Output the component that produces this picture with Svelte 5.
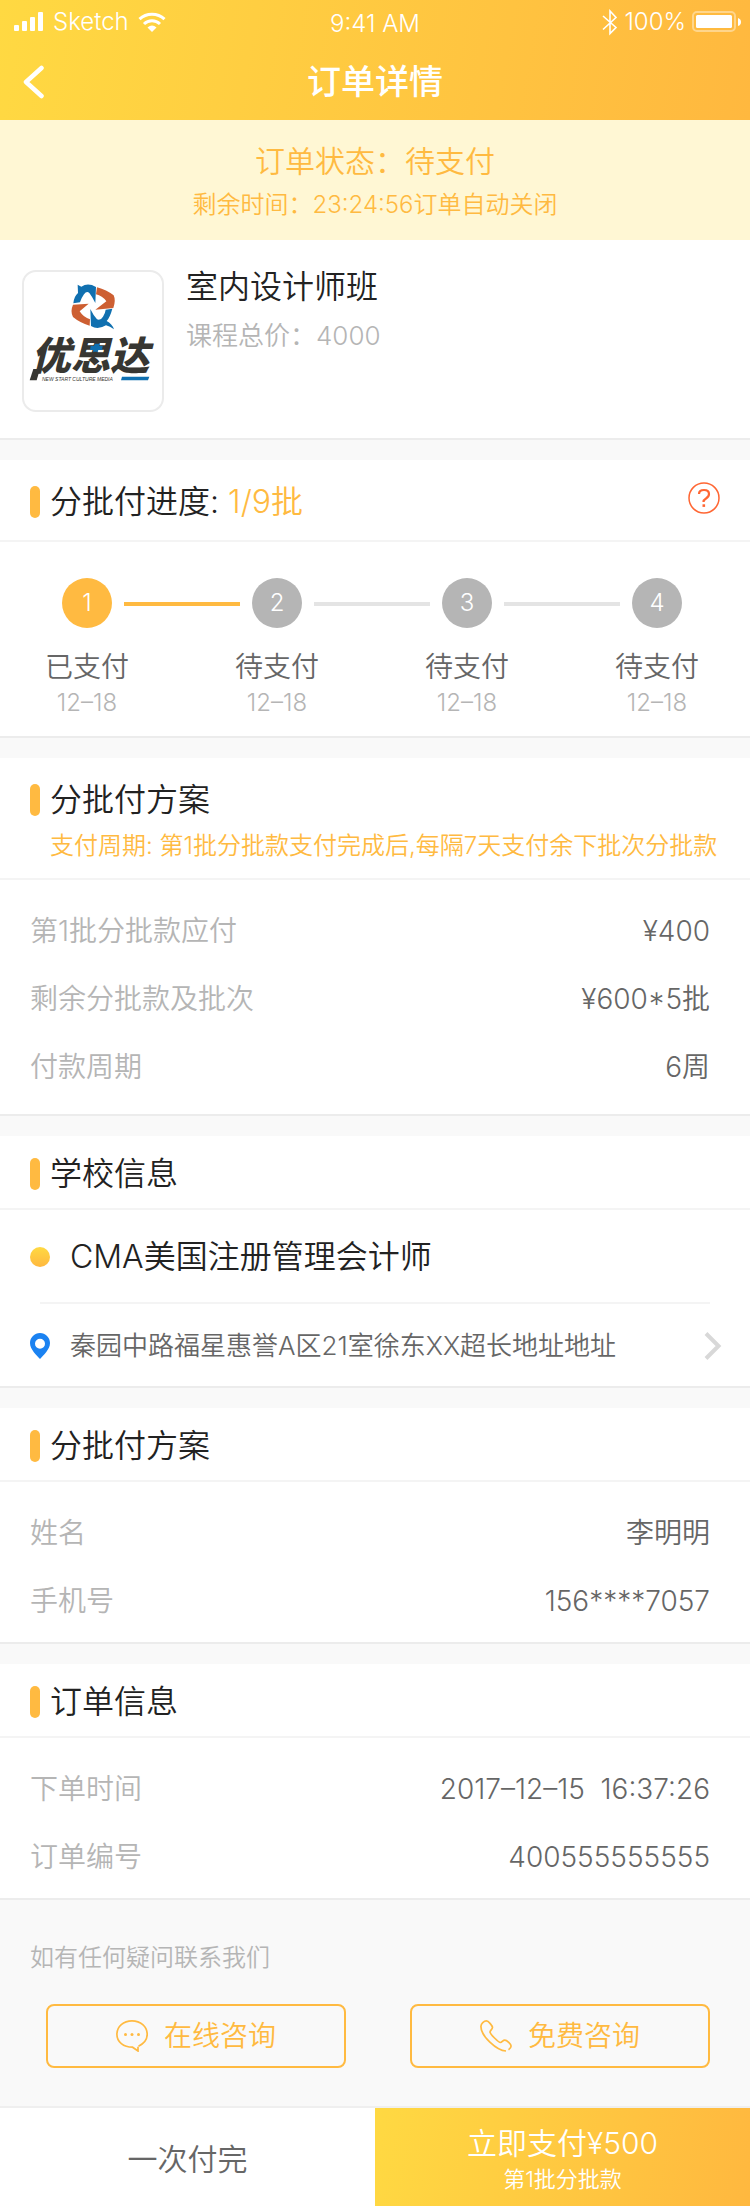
<script>
  const steps = [
    { label: '已支付', date: '12–18', done: true },
    { label: '待支付', date: '12–18', done: false },
    { label: '待支付', date: '12–18', done: false },
    { label: '待支付', date: '12–18', done: false }
  ];
  const plan = [
    ['第1批分批款应付', '¥400'],
    ['剩余分批款及批次', '¥600*5批'],
    ['付款周期', '6周']
  ];
  const person = [
    ['姓名', '李明明'],
    ['手机号', '156****7057']
  ];
  const order = [
    ['下单时间', '2017–12–15\u00a0 16:37:26'],
    ['订单编号', '400555555555']
  ];
</script>

{#snippet rows(items)}
  <dl class="rows">
    {#each items as [name, value]}
      <div class="row"><dt>{name}</dt><dd>{value}</dd></div>
    {/each}
  </dl>
{/snippet}

<div class="page">
  <header class="top">
    <div class="statusbar">
      <div class="carrier">
        <svg width="30" height="20" viewBox="0 0 30 20" fill="#fff" aria-hidden="true">
          <rect x="0" y="13" width="5" height="6" rx="1" /><rect x="8" y="9" width="5" height="10" rx="1" />
          <rect x="16" y="5" width="5" height="14" rx="1" /><rect x="24" y="0" width="5" height="19" rx="1" />
        </svg>
        <span>Sketch</span>
        <svg width="28" height="20" viewBox="0 0 28 20" fill="none" stroke="#fff" stroke-width="3" aria-hidden="true">
          <path d="M1.5 7.2A18 18 0 0 1 26.500 7.200" /><path d="M6 12A11.500 11.500 0 0 1 22 12" />
          <path d="M9.500 15.500Q14 11.300 18.500 15.500L14 20Z" fill="#fff" stroke="none" />
        </svg>
      </div>
      <span class="clock">9:41 AM</span>
      <div class="power">
        <svg width="16" height="27" viewBox="0 0 16 27" fill="none" stroke="#fff" stroke-width="1.600" aria-hidden="true">
          <path d="M1 7L14 18.500L8 24.500V2L14 8.500L1 20.500" />
        </svg>
        <span>100%</span>
        <svg width="50" height="22" viewBox="0 0 50 22" aria-hidden="true">
          <rect x="1" y="1" width="42" height="19" rx="4" fill="none" stroke="#fff" stroke-opacity=".4" stroke-width="2" />
          <rect x="4" y="4" width="36" height="13" rx="1.500" fill="#fff" />
          <path d="M46 7Q49 8 49 11Q49 14 46 15Z" fill="#fff" />
        </svg>
      </div>
    </div>
    <div class="nav">
      <button class="back" aria-label="返回">
        <svg width="22" height="34" viewBox="0 0 22 34" fill="none" stroke="#fff" stroke-width="4.500" stroke-linecap="round" stroke-linejoin="round">
          <path d="M18.500 3L3 17L18.500 31" />
        </svg>
      </button>
      <h1>订单详情</h1>
    </div>
  </header>

  <div class="notice">
    <p class="state">订单状态：待支付</p>
    <p class="countdown">剩余时间：23:24:56订单自动关闭</p>
  </div>

  <main>
    <section class="card course">
      <div class="logo">
        <svg viewBox="12 21 414 414" role="img" aria-label="优思达">
          <path fill="#1070b0" d="M173 59L184 65Q204 52 228 66L226 114Q216 94 208 84Q200 77 192 88Q184 99 180 112L160 115Q162 94 174 84Z" />
          <path fill="#cd5f32" d="M231 67Q260 75 281 91Q288 106 280 129L226 134L259 109Q247 92 228 88Z" />
          <path fill="#cd5f32" d="M206 116L179 139Q191 158 210 163L209 182Q179 173 159 156Q150 139 159 119Z" />
          <path fill="#1070b0" d="M211 132Q220 151 231 163Q241 168 249 155Q256 144 257 134L277 131Q270 157 260 168Q276 176 282 193Q270 184 258 181Q233 196 213 183Z" />
          <text class="brand" x="34" y="315">优思达</text>
          <path fill="#1070b0" d="M224 236H239L237 243H248L246 255H234L233 260H218L220 255H210L212 243H222Z" />
          <path fill="#373632" d="M40 312H60L50 346H29Z" />
          <text class="tagline" x="66" y="347">NEW START CULTURE MEDIA</text>
          <path fill="#1070b0" d="M306 335H388L384 346H303Z" />
        </svg>
      </div>
      <div class="info">
        <h2>室内设计师班</h2>
        <p>课程总价：4000</p>
      </div>
    </section>

    <section class="card">
      <div class="head tall">
        <h2>分批付进度: <span class="accent">1/9批</span></h2>
        <button class="help" aria-label="帮助">
          <svg width="32" height="32" viewBox="0 0 32 32" fill="none" stroke="#ff6633">
            <circle cx="16" cy="16" r="15" stroke-width="1.500" />
            <path d="M11 12Q11 8 16 8Q21 8 21 12Q21 14.500 18 16.500Q15.500 18 15.500 20" stroke-width="2.200" />
            <rect x="14.500" y="22.300" width="2.600" height="2.600" fill="#ff6633" stroke="none" />
          </svg>
        </button>
      </div>
      <ol class="steps">
        {#each steps as step, i}
          <li class="step" class:done={step.done}>
            <span class="num">{i + 1}</span>
            <span class="label">{step.label}</span>
            <span class="date">{step.date}</span>
          </li>
          {#if i < steps.length - 1}
            <li class="line" class:done={step.done} aria-hidden="true"></li>
          {/if}
        {/each}
      </ol>
    </section>

    <section class="card">
      <div class="head tall noted">
        <h2>分批付方案</h2>
        <p class="cycle">支付周期: 第1批分批款支付完成后,每隔7天支付余下批次分批款</p>
      </div>
      {@render rows(plan)}
    </section>

    <section class="card">
      <div class="head"><h2>学校信息</h2></div>
      <div class="school"><i class="dot"></i><span>CMA美国注册管理会计师</span></div>
      <a class="address" href="#map">
        <svg width="20" height="26" viewBox="0 0 20 26" aria-hidden="true">
          <path fill="#1b82f1" fill-rule="evenodd" d="M10 0C4.500 0 0 4.500 0 10C0 16.500 6.500 22 10 26C13.500 22 20 16.500 20 10C20 4.500 15.500 0 10 0ZM10 5.800A5 5 0 1 1 10 15.800A5 5 0 1 1 10 5.800Z" />
        </svg>
        <span>秦园中路福星惠誉A区21室徐东XX超长地址地址</span>
        <svg width="18" height="28" viewBox="0 0 18 28" fill="none" stroke="#d8d8d8" stroke-width="4" aria-hidden="true">
          <path d="M2 1.500L14.500 14L2 26.500" />
        </svg>
      </a>
    </section>

    <section class="card brief">
      <div class="head"><h2>分批付方案</h2></div>
      {@render rows(person)}
    </section>

    <section class="card brief">
      <div class="head"><h2>订单信息</h2></div>
      {@render rows(order)}
    </section>

    <section class="contact">
      <p>如有任何疑问联系我们</p>
      <div class="actions">
        <button>
          <svg width="32" height="32" viewBox="0 0 32 32" fill="none" stroke="#ffba41" stroke-width="1.700" aria-hidden="true">
            <path d="M22.500 26.200Q31.200 22 31.200 14.300C31.200 6.500 24.500 .9 16 .9S.9 6.500 .9 14.300C.9 22 7.500 27.200 16.500 27.200L22 31V26.800" />
            <g fill="#ffba41" stroke="none"><circle cx="9.500" cy="14.500" r="1.500" /><circle cx="16" cy="14.500" r="1.500" /><circle cx="22.500" cy="14.500" r="1.500" /></g>
          </svg>
          在线咨询
        </button>
        <button>
          <svg width="32" height="32" viewBox="0 0 32 32" fill="none" stroke="#ffba41" stroke-width="1.700" stroke-linejoin="round" aria-hidden="true">
            <path d="M26 31C16.500 30.500 .9 16 .9 6.500C.9 3.500 4 .9 6.500 .9C8.500 .9 12.500 6 12.500 7.500C12.500 9.200 10 10.500 10 12C10 14 18.500 22.500 20.500 22.500C22 22.500 22.800 20.200 24.800 20.200C26.800 20.200 31.100 24 31.100 26C31.100 27.500 30 28.800 28.500 29.800" />
          </svg>
          免费咨询
        </button>
      </div>
    </section>
  </main>

  <footer>
    <button class="full">一次付完</button>
    <button class="pay"><span>立即支付¥500</span><small>第1批分批款</small></button>
  </footer>
</div>

<style>
  :global(body) { margin: 0; background: #f9f9f9; }
  .page {
    font-family: Inter, "Noto Sans CJK SC", sans-serif;
    font-weight: 350;
    color: #222;
    background: #f9f9f9;
  }
  h1, h2, p, dl, dd, ol { margin: 0; padding: 0; font-weight: inherit; }
  button { font: inherit; border: 0; padding: 0; background: none; cursor: pointer; }
  svg { display: block; flex: none; }

  .top { background: linear-gradient(100deg, #ffd942, #ffb83f); color: #fff; }
  .statusbar {
    display: grid;
    grid-template-columns: 1fr auto 1fr;
    align-items: center;
    height: 44px;
    padding: 0 8px;
    font-size: 24px;
    line-height: 28px;
  }
  .carrier, .power { display: flex; align-items: center; gap: 9px; }
  .carrier { padding-left: 6px; }
  .power { justify-content: flex-end; gap: 6px; }
  .clock { padding-top: 3px; }
  .nav { display: grid; grid-template-columns: 60px 1fr 60px; align-items: center; height: 76px; }
  .back { display: flex; padding-left: 23px; }
  h1 { font-size: 34px; font-weight: 500; line-height: 48px; text-align: center; }

  .notice {
    padding: 20px 0 12px;
    background: #fff7d4;
    color: #ffba41;
    text-align: center;
  }
  .state { font-size: 30px; line-height: 42px; }
  .countdown { font-size: 24px; line-height: 46px; }

  .card { background: #fff; border-bottom: 2px solid #ececec; margin-bottom: 20px; }
  .course { display: flex; gap: 22px; padding: 30px 22px 26px; }
  .logo { width: 138px; height: 138px; border: 2px solid #ebebeb; border-radius: 14px; }
  .brand { font: italic 900 118px "Noto Sans CJK SC", sans-serif; fill: #373632; }
  .tagline { font: italic 15px "Liberation Sans", sans-serif; fill: #373632; }
  .info h2 { font-size: 32px; line-height: 34px; }
  .info p { font-size: 26px; line-height: 36px; margin-top: 14px; color: #b5b5b5; }

  .head {
    display: flex;
    flex-wrap: wrap;
    align-items: center;
    justify-content: space-between;
    padding: 18px 30px 14px;
    border-bottom: 2px solid #f4f4f4;
  }
  .head.tall { padding: 22px 30px 18px; }
  .head.noted { padding-bottom: 14px; }
  .head h2 { display: flex; align-items: center; white-space: pre; font-size: 32px; line-height: 40px; }
  .head h2::before { content: ""; width: 10px; height: 32px; margin-right: 10px; border-radius: 5px; background: #ffba41; }
  .accent { color: #ffba41; }
  .help { align-self: flex-start; }
  .cycle { padding-left: 20px; font-size: 24px; line-height: 36px; margin-top: 8px; color: #ffba41; white-space: nowrap; }

  .steps { display: flex; list-style: none; padding: 36px 68px 16px 62px; }
  .step { display: flex; flex-direction: column; align-items: center; width: 50px; white-space: nowrap; }
  .num {
    width: 50px;
    border-radius: 50%;
    background: #b5b5b5;
    color: #fff;
    font-size: 24px;
    line-height: 50px;
    text-align: center;
  }
  .label { margin-top: 20px; font-size: 28px; line-height: 38px; color: #666; }
  .date { font-size: 24px; line-height: 34px; color: #b5b5b5; }
  .line { flex: 1; height: 4px; margin: 24px 12px 0; background: #e4e4e4; }
  .step.done .num, .line.done { background: #ffba41; }

  .rows { padding: 17px 40px 13px 30px; }
  .brief .rows { padding-bottom: 7px; }
  .row { display: flex; justify-content: space-between; font-size: 28px; line-height: 68px; }
  dt { color: #b5b5b5; }
  dd { color: #666; }

  .school {
    display: flex;
    align-items: center;
    gap: 20px;
    padding: 2px 0 0 30px;
    font-size: 32px;
    line-height: 90px;
  }
  .dot { width: 20px; height: 20px; border-radius: 50%; background: linear-gradient(#ffd942, #ffb83f); }
  .address {
    display: flex;
    align-items: center;
    gap: 20px;
    padding: 4px 28px 0 30px;
    color: #666;
    font-size: 26px;
    line-height: 80px;
    text-decoration: none;
    background: linear-gradient(#f4f4f4, #f4f4f4) 40px 0 / calc(100% - 80px) 2px no-repeat;
  }
  .address span { flex: 1; }

  .contact { padding: 20px 40px 38px 30px; font-size: 24px; line-height: 36px; color: #b5b5b5; }
  .actions { display: flex; gap: 64px; margin: 28px 0 0 16px; }
  .actions button {
    display: flex;
    flex: 1;
    align-items: center;
    justify-content: center;
    gap: 16px;
    height: 64px;
    border: 2px solid #ffba41;
    border-radius: 8px;
    color: #ffba41;
    font-size: 28px;
  }

  footer { display: flex; border-top: 2px solid #efefef; }
  footer button { flex: 1; height: 98px; }
  .full { background: #fff; color: #666; font-size: 30px; }
  .pay {
    display: flex;
    flex-direction: column;
    align-items: center;
    justify-content: center;
    padding-top: 4px;
    background: linear-gradient(100deg, #ffd942, #ffb83f);
    color: #fff;
    font-size: 30px;
    line-height: 40px;
  }
  .pay small { font-size: 22px; line-height: 32px; }
</style>
